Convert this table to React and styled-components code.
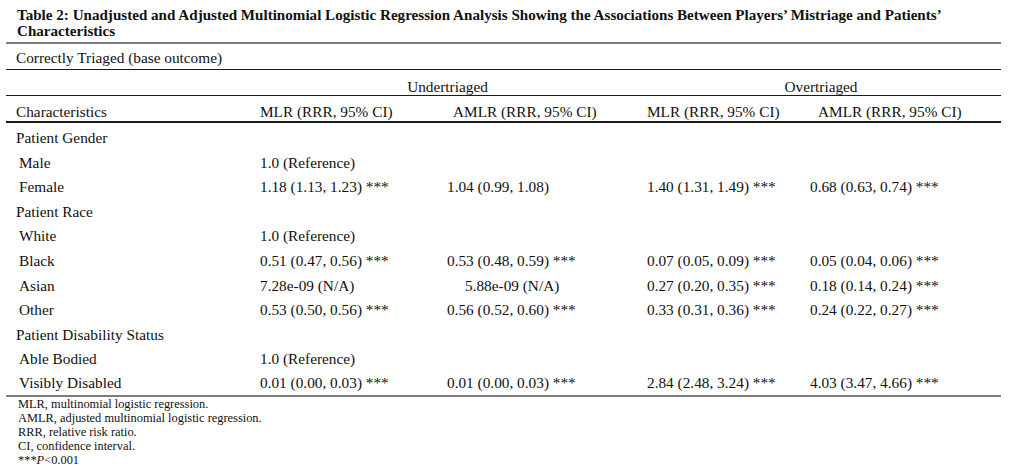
import React from 'react'
import styled, { createGlobalStyle } from 'styled-components'

const GlobalStyle = createGlobalStyle`
  html, body {
    margin: 0;
    padding: 0;
    background: #ffffff;
  }
  body {
    font-family: "Liberation Serif", "Times New Roman", serif;
    color: #111;
  }
`;

const COLS = '248px 187px 200px 163px 197px';

const Page = styled.div`
  width: 1021px;
  height: 470px;
  padding: 7px 0 0 6px;
  box-sizing: border-box;
`;

const Title = styled.h1`
  margin: 0 0 3px 0;
  padding-left: 11px;
  font-size: 15.1px;
  line-height: 16px;
  font-weight: bold;
  white-space: nowrap;
`;

const Table = styled.div`
  width: 995px;
  border-top: 2.5px solid #7c7c7c;
`;

const Row = styled.div`
  display: grid;
  grid-template-columns: ${COLS};
  height: ${p => p.$h || 24.6}px;
  align-items: end;
  box-sizing: border-box;
  border-bottom: ${p => p.$line || 'none'};
`;

const Cell = styled.div`
  grid-column: ${p => p.$span ? `span ${p.$span}` : 'auto'};
  padding-left: ${p => p.$pad ?? 6}px;
  text-align: ${p => p.$center ? 'center' : 'left'};
  font-size: 15.3px;
  line-height: 17px;
  padding-bottom: ${p => p.$pb ?? 3}px;
  white-space: nowrap;
`;

const Notes = styled.div`
  padding: 0 0 0 12px;
  font-size: 12.4px;
  line-height: 14px;
`;

const groups = [
  {
    name: 'Patient Gender',
    items: [
      ['Male', '1.0 (Reference)', '', '', ''],
      ['Female', '1.18 (1.13, 1.23) ***', '1.04 (0.99, 1.08)', '1.40 (1.31, 1.49) ***', '0.68 (0.63, 0.74) ***'],
    ],
  },
  {
    name: 'Patient Race',
    items: [
      ['White', '1.0 (Reference)', '', '', ''],
      ['Black', '0.51 (0.47, 0.56) ***', '0.53 (0.48, 0.59) ***', '0.07 (0.05, 0.09) ***', '0.05 (0.04, 0.06) ***'],
      ['Asian', '7.28e-09 (N/A)', '5.88e-09 (N/A)', '0.27 (0.20, 0.35) ***', '0.18 (0.14, 0.24) ***'],
      ['Other', '0.53 (0.50, 0.56) ***', '0.56 (0.52, 0.60) ***', '0.33 (0.31, 0.36) ***', '0.24 (0.22, 0.27) ***'],
    ],
  },
  {
    name: 'Patient Disability Status',
    items: [
      ['Able Bodied', '1.0 (Reference)', '', '', ''],
      ['Visibly Disabled', '0.01 (0.00, 0.03) ***', '0.01 (0.00, 0.03) ***', '2.84 (2.48, 3.24) ***', '4.03 (3.47, 4.66) ***'],
    ],
  },
];

function DataRow({ item, last }) {
  const [label, ...vals] = item;
  const pb = last ? 4.5 : 3;
  return (
    <Row $line={last ? '2.5px solid #7c7c7c' : undefined} $h={last ? 27 : 24.6}>
      <Cell $pad={13} $pb={pb}>{label}</Cell>
      {vals.map((v, i) => (
        <Cell key={i} $pad={v.startsWith('5.88') ? 24 : 6} $pb={pb}>{v}</Cell>
      ))}
    </Row>
  );
}

export default function App() {
  const rows = groups.flatMap(g => [{ group: g.name }, ...g.items.map(it => ({ item: it }))]);
  return (
    <Page>
      <GlobalStyle />
      <Title>
        Table 2: Unadjusted and Adjusted Multinomial Logistic Regression Analysis Showing the Associations Between Players’ Mistriage and Patients’
        <br />
        Characteristics
      </Title>
      <Table>
        <Row $h={26} $line="1.5px solid #1a1a1a">
          <Cell $span={5} $pad={10}>Correctly Triaged (base outcome)</Cell>
        </Row>
        <Row $h={26} $line="1.5px solid #1a1a1a">
          <Cell $pb={0} />
          <Cell $span={2} $center $pad={0} $pb={0}>Undertriaged</Cell>
          <Cell $span={2} $center $pad={0} $pb={0}>Overtriaged</Cell>
        </Row>
        <Row $h={27} $line="2px solid #1a1a1a">
          <Cell $pad={10} $pb={1}>Characteristics</Cell>
          <Cell $pb={1}>MLR (RRR, 95% CI)</Cell>
          <Cell $pad={12} $pb={1}>AMLR (RRR, 95% CI)</Cell>
          <Cell $pb={1}>MLR (RRR, 95% CI)</Cell>
          <Cell $pad={14} $pb={1}>AMLR (RRR, 95% CI)</Cell>
        </Row>
        {rows.map((r, i) =>
          r.group ? (
            <Row key={i} $h={i === 0 ? 26 : 24.6}>
              <Cell $span={5} $pad={10}>{r.group}</Cell>
            </Row>
          ) : (
            <DataRow key={i} item={r.item} last={i === rows.length - 1} />
          )
        )}
      </Table>
      <Notes>
        <div>MLR, multinomial logistic regression.</div>
        <div>AMLR, adjusted multinomial logistic regression.</div>
        <div>RRR, relative risk ratio.</div>
        <div>CI, confidence interval.</div>
        <div>***<i>P</i>&lt;0.001</div>
      </Notes>
    </Page>
  );
}
